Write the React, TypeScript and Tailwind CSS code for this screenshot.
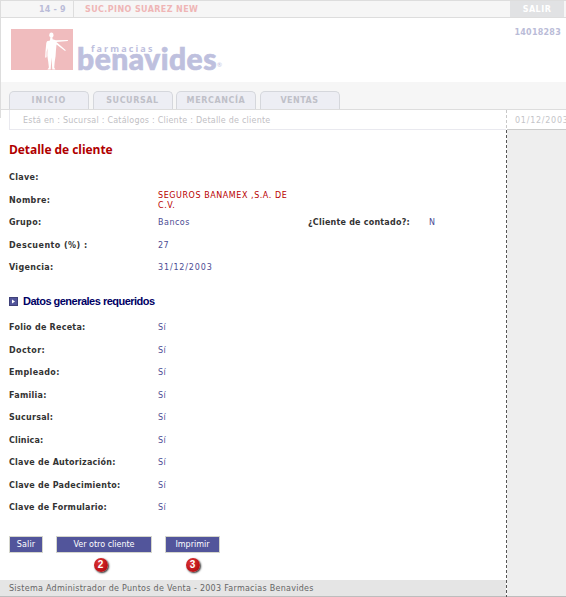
import React from "react";

const tabs = [
  { name: "INICIO", box: "w-[80px]", text: "tracking-[1.1px]" },
  { name: "SUCURSAL", box: "w-[80px]", text: "tracking-[0.6px]" },
  { name: "MERCANCÍA", box: "w-[80px]", text: "tracking-[0.6px]" },
  { name: "VENTAS", box: "w-[80px]", text: "tracking-[0.5px]" },
];

const required = [
  { label: "Folio de Receta:", spacing: "tracking-[0.25px]" },
  { label: "Doctor:", spacing: "tracking-[0.4px]" },
  { label: "Empleado:", spacing: "tracking-[0.36px]" },
  { label: "Familia:", spacing: "tracking-[0.26px]" },
  { label: "Sucursal:", spacing: "tracking-[0.26px]" },
  { label: "Clinica:", spacing: "tracking-[0.15px]" },
  { label: "Clave de Autorización:", spacing: "tracking-[0.25px]" },
  { label: "Clave de Padecimiento:", spacing: "tracking-[0.26px]" },
  { label: "Clave de Formulario:", spacing: "tracking-[0.22px]" },
];

function Row({
  label,
  value,
  spacing = "tracking-[0.3px]",
  valueSpacing = "tracking-[0.4px]",
  children,
}: {
  label: string;
  value?: string;
  spacing?: string;
  valueSpacing?: string;
  children?: React.ReactNode;
}) {
  return (
    <div className="flex h-[22.5px] items-center whitespace-nowrap">
      <span className={`w-[149px] text-[8px] font-bold text-[#333333] ${spacing}`}>{label}</span>
      <span className={`w-[150px] text-[8px] text-[#4c4c94] ${valueSpacing}`}>{value}</span>
      {children}
    </div>
  );
}

function Logo() {
  return (
    <div className="flex">
      <svg width="62" height="41" viewBox="0 0 62 41" className="shrink-0">
        <rect width="62" height="41" fill="#f0bcbe" />
        <g fill="#fff">
          <ellipse cx="40.4" cy="6.2" rx="2.1" ry="2.7" />
          <path d="M39.3 8.5h2.2v1.7l3.4 1.1 12-.4v1L45.4 13l9.4 8.2-.7.8-8.6-6.5-.6 6.5-.3 5-.9 6-.5 5.5 1.2 2h-3.1l-.9-12-.7 12h-3.2l1.4-2-.7-6-.9-6 .2-7.5-.8 4-.1 5-.8 1-.6-1 .3-6 .8-8 .7-1.8 3-.8z" />
        </g>
      </svg>
      <div className="ml-[4px] h-[48px] w-[150px] text-[#bec0de]">
        <div className="mt-[15px] pl-[14px] font-['Open_Sans',sans-serif] text-[9px] leading-[9px] font-bold tracking-[2.1px]">farmacias</div>
        <div className="mt-[-7px] flex items-end font-['Lato','Open_Sans',sans-serif]">
          <span className="text-[30px] leading-[24px] font-black tracking-[0.5px] [-webkit-text-stroke:0.7px_#bec0de]">benavides</span>
          <span className="mb-[2px] text-[6px] leading-[6px]">®</span>
        </div>
      </div>
    </div>
  );
}

function Badge({ n }: { n: string }) {
  return (
    <div className="flex h-[14px] w-[14px] items-center justify-center rounded-full bg-radial-[at_35%_30%] from-[#dd3333] to-[#a80008] font-['Liberation_Sans',sans-serif] text-[10px] font-bold text-white shadow-[1px_1px_2px_rgba(0,0,0,0.85)]">
      {n}
    </div>
  );
}

const buttonStyle =
  "flex h-[17px] items-center justify-center border border-[#d5d6cc] bg-[#52559b] pt-px text-[8px] text-white whitespace-nowrap";

export default function App() {
  return (
    <div className="h-[597px] w-[566px] overflow-hidden bg-white font-['DejaVu_Sans',Verdana,sans-serif] leading-[10px]">
      <div className="h-[110px] border-l border-[#dddddd]">
        <div className="flex h-[18px] border-y border-[#dddddd] bg-[#f6f6f6] text-[8px] font-bold whitespace-nowrap">
          <div className="flex w-[73px] items-center border-r border-[#dddddd] pt-px pl-[38px] tracking-[0.2px] text-[#babcd8]">14 - 9</div>
          <div className="flex flex-1 items-center pt-px pl-[11px] tracking-[0.4px] text-[#efb5b5]">SUC.PINO SUAREZ NEW</div>
          <div className="flex w-[54px] items-center justify-center bg-[#e1e2e4] pt-px font-black tracking-[0.5px] text-white">SALIR</div>
          <div className="w-[2px]" />
        </div>
        <div className="flex h-[64px] justify-between pt-[11px] pl-[10px]">
          <Logo />
          <span className="mt-[-1px] pr-[5px] text-[8px] font-bold tracking-[0.25px] text-[#babcd8]">14018283</span>
        </div>
        <div className="flex h-[28px] items-end gap-[3.5px] border-b border-[#dddddd] bg-[#f6f6f6] pl-[8px]">
          {tabs.map((tab) => (
            <div key={tab.name} className={`flex h-[18px] items-center justify-center rounded-t-[5px] border border-b-0 border-[#d5d7dc] bg-[#edeef4] text-[8px] font-bold text-[#bfc0c8] ${tab.box} ${tab.text}`}>
              {tab.name}
            </div>
          ))}
        </div>
      </div>
      <div className="flex h-[487px]">
        <div className="flex w-[506px] flex-col">
          <div className="flex h-[20px]">
            <div className="h-[8px] w-[9px] border-l border-[#dddddd]" />
            <div className="flex flex-1 items-center border-b border-l border-[#e9e9ef] pt-[2px] pl-[13px] text-[8px] tracking-[0.23px] text-[#bfc0c4]">
              Está en : Sucursal : Catálogos : Cliente : Detalle de cliente
            </div>
          </div>
          <div className="flex flex-1 flex-col pl-[9px]">
            <h1 className="mt-[12px] h-[25px] font-['Open_Sans',sans-serif] text-[12px] leading-[15px] font-bold tracking-[-0.05px] text-[#b00000]">Detalle de cliente</h1>
            <Row label="Clave:" />
            <div className="flex h-[22.5px] items-center">
              <span className="w-[149px] text-[8px] font-bold tracking-[0.35px] text-[#333333]">Nombre:</span>
              <span className="text-[8px] tracking-[0.56px] whitespace-nowrap text-[#b90000]">
                SEGUROS BANAMEX ,S.A. DE
                <br />
                C.V.
              </span>
            </div>
            <Row label="Grupo:" value="Bancos" valueSpacing="tracking-[0.5px]">
              <span className="w-[121px] text-[8px] font-bold tracking-[0.22px] text-[#333333]">¿Cliente de contado?:</span>
              <span className="text-[8px] text-[#4c4c94]">N</span>
            </Row>
            <Row label="Descuento (%) :" value="27" spacing="tracking-[0.45px]" />
            <Row label="Vigencia:" value="31/12/2003" valueSpacing="tracking-[0.85px]" />
            <div className="flex h-[37.5px] items-center pt-[6px]">
              <svg width="9" height="9" viewBox="0 0 9 9" className="mr-[5px]">
                <rect width="9" height="9" fill="#3f4179" />
                <rect x="1" y="1" width="7" height="7" fill="#52559b" />
                <path d="M3 2.5v4L6 4.5z" fill="#fff" />
              </svg>
              <h2 className="font-['Liberation_Sans',sans-serif] text-[11px] font-bold tracking-[-0.51px] text-[#000064]">Datos generales requeridos</h2>
            </div>
            {required.map((item) => (
              <Row key={item.label} label={item.label} value="Sí" spacing={item.spacing} />
            ))}
            <div className="mt-[16px] flex">
              <div className={`${buttonStyle} w-[34px] tracking-[0.2px]`}>Salir</div>
              <div className="ml-[13px] flex w-[96px] flex-col items-center">
                <div className={`${buttonStyle} w-[96px]`}>Ver otro cliente</div>
                <div className="mt-[5px] mr-[7px]"><Badge n="2" /></div>
              </div>
              <div className="ml-[13px] flex w-[55px] flex-col items-center">
                <div className={`${buttonStyle} w-[55px]`}>Imprimir</div>
                <div className="mt-[5px]"><Badge n="3" /></div>
              </div>
            </div>
          </div>
          <div className="flex h-[17px] items-center border-b border-[#bdbdbd] bg-[#e5e5e5] pt-px pl-[9px] text-[8px] tracking-[0.27px] text-[#666666]">
            Sistema Administrador de Puntos de Venta - 2003 Farmacias Benavides
          </div>
        </div>
        <div className="flex w-px flex-col">
          <div className="h-[20px] bg-[repeating-linear-gradient(to_bottom,#c8c8c8_0_3px,#ffffff_3px_5px)]" />
          <div className="flex-1 bg-[repeating-linear-gradient(to_bottom,#555555_0_3px,#ffffff_3px_5px)]" />
        </div>
        <div className="flex w-[59px] flex-col overflow-hidden">
          <div className="flex h-[20px] items-center border-b border-[#cccccc] pt-[2px] pl-[8px] text-[8px] tracking-[0.75px] whitespace-nowrap text-[#c4c4c8]">01/12/2003</div>
          <div className="flex-1 border-b border-[#bdbdbd] bg-[#eeeeee]" />
        </div>
      </div>
    </div>
  );
}
